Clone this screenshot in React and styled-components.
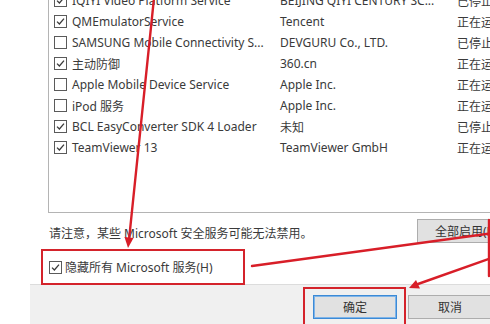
import React from 'react';
import styled, { createGlobalStyle } from 'styled-components';

const GlobalStyle = createGlobalStyle`
  html, body {
    margin: 0;
    padding: 0;
    background: #ffffff;
  }
  body {
    font-family: "Noto Sans", "Noto Sans CJK SC", sans-serif;
    overflow: hidden;
  }
`;

const services = [
  { name: 'IQIYI Video Platform Service', maker: 'BEIJING QIYI CENTURY SC...', status: '已停止', on: true },
  { name: 'QMEmulatorService', maker: 'Tencent', status: '正在运行', on: true },
  { name: 'SAMSUNG Mobile Connectivity S...', maker: 'DEVGURU Co., LTD.', status: '已停止', on: false },
  { name: '主动防御', maker: '360.cn', status: '正在运行', on: true },
  { name: 'Apple Mobile Device Service', maker: 'Apple Inc.', status: '正在运行', on: false },
  { name: 'iPod 服务', maker: 'Apple Inc.', status: '正在运行', on: false },
  { name: 'BCL EasyConverter SDK 4 Loader', maker: '未知', status: '已停止', on: true },
  { name: 'TeamViewer 13', maker: 'TeamViewer GmbH', status: '正在运行', on: true },
];

const Page = styled.div`
  position: relative;
  width: 490px;
  height: 324px;
  overflow: hidden;
  background: #ffffff;
  padding-left: 30px;
  box-sizing: border-box;
  display: flex;
  color: #3a3a3a;
  font-size: 12px;
`;

const Window = styled.div`
  flex: 1;
  display: flex;
  flex-direction: column;
  background: #f0f0f0;
  min-width: 560px;
`;

const TabPage = styled.div`
  height: 285px;
  flex-shrink: 0;
  background: #ffffff;
  border-bottom: 1px solid #dcdcdc;
  box-sizing: border-box;
  padding-left: 11px;
  display: flex;
  flex-direction: column;
`;

const ListBox = styled.div`
  margin: -13px 0 0 7px;
  height: 226px;
  flex-shrink: 0;
  border: 1px solid #b4b4b4;
  box-sizing: border-box;
  padding: 2px 0 0 5px;
`;

const Row = styled.div`
  display: grid;
  grid-template-columns: 226px 177px 1fr;
  height: 21px;
  align-items: center;
  white-space: nowrap;
`;

const NameCell = styled.div`
  display: flex;
  align-items: center;
  gap: 5px;
`;

const Box = styled.span`
  width: 13px;
  height: 13px;
  box-sizing: border-box;
  border: 1px solid #5a5a5a;
  background: #fff;
  display: inline-flex;
  align-items: center;
  justify-content: center;
  flex-shrink: 0;
`;

const Check = ({ on }) => (
  <Box>
    {on && (
      <svg width="9" height="9" viewBox="0 0 9 9">
        <path d="M1 4.6 L3.4 7 L8 1.6" fill="none" stroke="#3a3a3a" strokeWidth="1.3" />
      </svg>
    )}
  </Box>
);

const NoteRow = styled.div`
  height: 36px;
  flex-shrink: 0;
  display: flex;
  align-items: center;
  padding-left: 8px;
`;

const Note = styled.span`
  width: 368px;
  padding-top: 3px;
`;

const Button = styled.div`
  width: ${({ w }) => w}px;
  height: 24px;
  box-sizing: border-box;
  background: #e1e1e1;
  border: 1px solid ${({ primary }) => (primary ? '#3c8ad6' : '#adadad')};
  box-shadow: ${({ primary }) => (primary ? 'inset 0 0 0 1px #7fb4e8' : 'none')};
  display: flex;
  align-items: center;
  justify-content: ${({ left }) => (left ? 'flex-start' : 'center')};
  padding-left: ${({ left }) => (left ? '17px' : '0')};
  color: #333;
  flex-shrink: 0;
`;

const Highlight = styled.div`
  border: 2px solid #d4232b;
  box-sizing: border-box;
  display: flex;
  align-items: center;
  flex-shrink: 0;
`;

const HideBox = styled(Highlight)`
  width: 204px;
  height: 36px;
  padding-left: 6px;
  gap: 3px;
`;

const ButtonBar = styled.div`
  flex: 1;
  display: flex;
  align-items: flex-start;
  gap: 2px;
  padding: 2px 0 0 273px;
`;

const OkBox = styled(Highlight)`
  padding: 6px 7px 8px 8px;
`;

const Overlay = styled.svg`
  position: absolute;
  left: 0;
  top: 0;
  pointer-events: none;
`;

const red = '#d81e28';

const Arrows = () => (
  <Overlay width="490" height="324" viewBox="0 0 490 324">
    <g stroke={red} strokeWidth="2.4" fill="none" strokeLinecap="round">
      <line x1="154" y1="-2" x2="129.2" y2="238" />
      <line x1="494" y1="233" x2="252" y2="266" />
      <line x1="494" y1="257" x2="418" y2="284" />
      <line x1="489" y1="220" x2="489" y2="276" />
    </g>
    <polygon points="128,248 124.5,237 133.5,238" fill={red} />
    <polygon points="409,288 416,280 420,288.5" fill={red} />
  </Overlay>
);

export default function App() {
  return (
    <>
      <GlobalStyle />
      <Page>
        <Window>
          <TabPage>
            <ListBox>
              {services.map((s) => (
                <Row key={s.name}>
                  <NameCell>
                    <Check on={s.on} />
                    <span>{s.name}</span>
                  </NameCell>
                  <span>{s.maker}</span>
                  <span>{s.status}</span>
                </Row>
              ))}
            </ListBox>
            <NoteRow>
              <Note>请注意，某些 Microsoft 安全服务可能无法禁用。</Note>
              <Button w={100} left>全部启用(E)</Button>
            </NoteRow>
            <HideBox>
              <Check on />
              <span>隐藏所有 Microsoft 服务(H)</span>
            </HideBox>
          </TabPage>
          <ButtonBar>
            <OkBox>
              <Button w={84} primary>确定</Button>
            </OkBox>
            <Button w={84} style={{ marginTop: 8 }}>取消</Button>
          </ButtonBar>
        </Window>
        <Arrows />
      </Page>
    </>
  );
}
